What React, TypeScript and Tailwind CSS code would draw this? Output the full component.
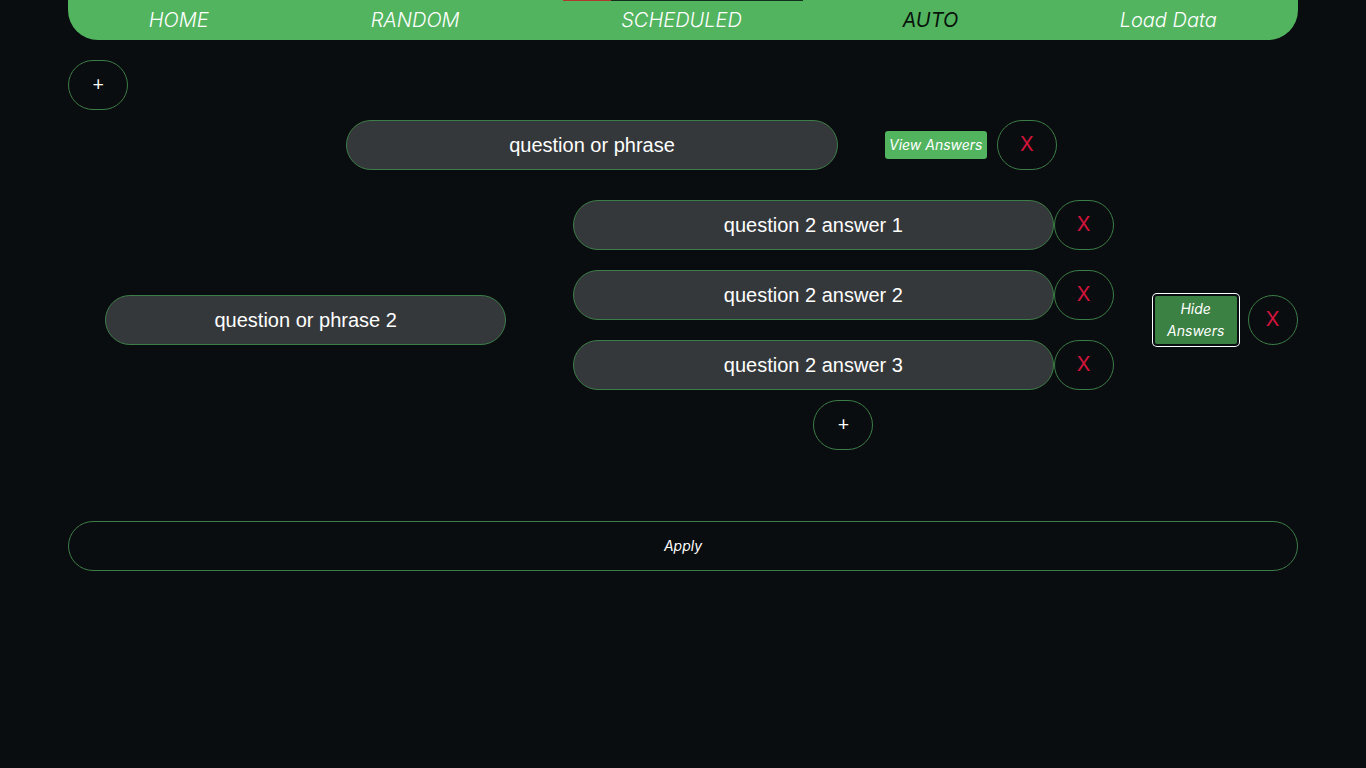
import { useState } from "react";

const script = "font-['Inter','Open_Sans',sans-serif] italic";
const outline = "rounded-[25px] border border-[#3b7d46]";
const field =
  "h-[50px] min-w-0 rounded-[25px] border border-[#3b7d46] bg-[#35383b] px-4 text-center font-['Liberation_Sans',Arial,sans-serif] text-xl text-white outline-none";

const links = [
  { label: "HOME", active: false },
  { label: "RANDOM", active: false },
  { label: "SCHEDULED", active: false },
  { label: "AUTO", active: true },
  { label: "Load Data", active: false },
];

function AddButton({ label }: { label: string }) {
  return (
    <button
      type="button"
      aria-label={label}
      className={`h-[50px] w-[60px] pb-0.5 font-['Open_Sans',sans-serif] text-xl text-white ${outline}`}
    >
      +
    </button>
  );
}

function RemoveButton({ label, round = false }: { label: string; round?: boolean }) {
  return (
    <button
      type="button"
      aria-label={label}
      className={`h-[50px] shrink-0 pb-0.5 font-['Inter','Open_Sans',sans-serif] text-xl text-[#d3143c] ${round ? "w-[50px]" : "w-[60px]"} ${outline}`}
    >
      X
    </button>
  );
}

export default function App() {
  const [first, setFirst] = useState("question or phrase");
  const [second, setSecond] = useState("question or phrase 2");
  const [answers, setAnswers] = useState([
    "question 2 answer 1",
    "question 2 answer 2",
    "question 2 answer 3",
  ]);

  return (
    <div className="relative min-h-screen bg-[#0a0d10]">
      <div className="absolute inset-x-0 top-0 flex h-px justify-center">
        <div className="w-12 bg-[#b0382c]" />
        <div className="w-48 bg-[#10301a]" />
      </div>
      <div className="mx-auto w-[90%]">
        <nav
          className={`grid h-10 grid-cols-[221fr_252fr_281fr_217fr_259fr] items-center rounded-b-[30px] bg-[#52b45f] text-center text-xl ${script}`}
        >
          {links.map((link) => (
            <a key={link.label} href="#" className={link.active ? "text-[#07140a]" : "font-light text-white"}>
              {link.label}
            </a>
          ))}
        </nav>

        <main className="pt-5">
          <div className="flex">
            <AddButton label="Add question" />
          </div>

          <section className="flex items-center justify-center py-2.5">
            <input
              aria-label="Question 1"
              value={first}
              onChange={(e) => setFirst(e.target.value)}
              className={`mx-[3%] w-2/5 ${field}`}
            />
            <button
              type="button"
              className={`mx-2.5 h-7 w-[102px] rounded-[3px] bg-[#52b45f] text-sm whitespace-nowrap text-white ${script}`}
            >
              View Answers
            </button>
            <RemoveButton label="Remove question 1" />
          </section>

          <section className="flex items-center py-2.5">
            <input
              aria-label="Question 2"
              value={second}
              onChange={(e) => setSecond(e.target.value)}
              className={`mx-[3%] w-[401px] ${field}`}
            />
            <div className="flex min-w-0 flex-1 flex-col items-center">
              {answers.map((answer, i) => (
                <div key={i} className="flex w-full justify-center py-2.5">
                  <input
                    aria-label={`Answer ${i + 1}`}
                    value={answer}
                    onChange={(e) =>
                      setAnswers(answers.map((a, j) => (j === i ? e.target.value : a)))
                    }
                    className={`w-4/5 ${field}`}
                  />
                  <RemoveButton label={`Remove answer ${i + 1}`} />
                </div>
              ))}
              <AddButton label="Add answer" />
            </div>
            <button
              type="button"
              className={`mx-2.5 w-[84px] shrink-0 rounded-[3px] border border-[#0a0d10] bg-[#3b8144] px-2 py-0.5 text-sm leading-[22px] text-white shadow-[0_0_0_1px_#0a0d10,0_0_0_2px_#ffffff] ${script}`}
            >
              Hide Answers
            </button>
            <RemoveButton label="Remove question 2" round />
          </section>

          <button
            type="button"
            className={`mt-[61px] h-[50px] w-full text-sm text-white ${script} ${outline}`}
          >
            Apply
          </button>
        </main>
      </div>
    </div>
  );
}
